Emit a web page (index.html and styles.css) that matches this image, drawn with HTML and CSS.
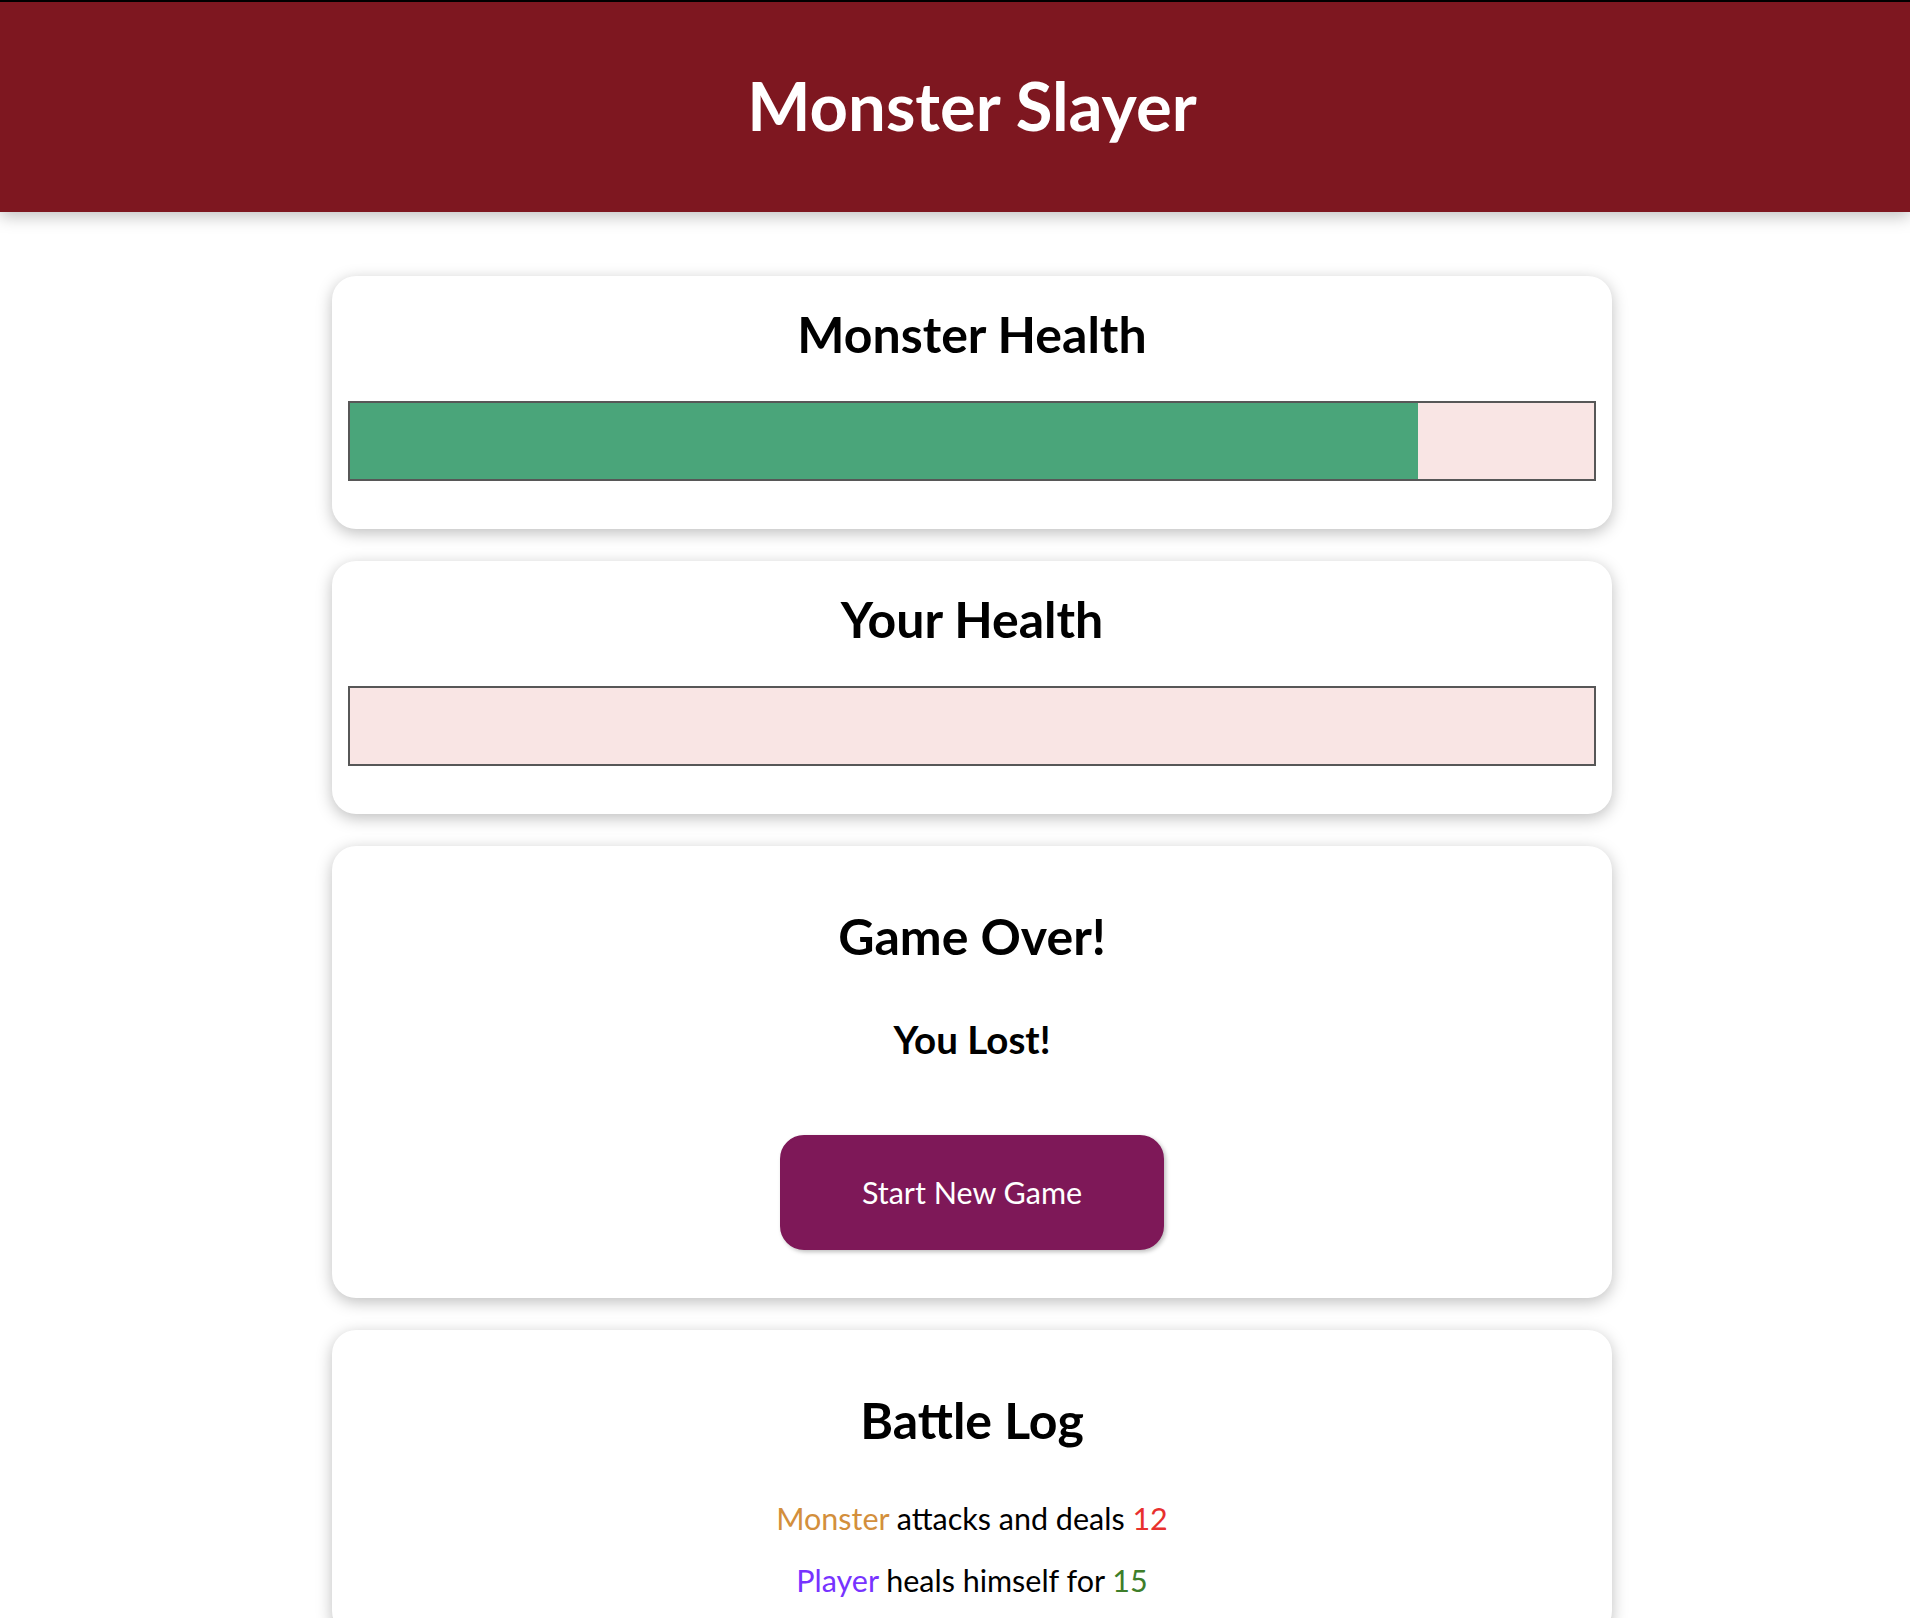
FILE: index.html
```html
<!DOCTYPE html>
<html lang="en">
<head>
  <meta charset="UTF-8">
  <meta name="viewport" content="width=device-width, initial-scale=1.0">
  <title>Monster Slayer</title>
  <link rel="stylesheet" href="styles.css">
</head>
<body>
  <header>
    <h1>Monster Slayer</h1>
  </header>

  <div id="game">
    <section id="monster" class="container">
      <h2>Monster Health</h2>
      <div class="healthbar">
        <div class="healthbar__value" style="width: 85.85%;"></div>
      </div>
    </section>

    <section id="player" class="container">
      <h2>Your Health</h2>
      <div class="healthbar">
        <div class="healthbar__value" style="width: 0%;"></div>
      </div>
    </section>

    <section class="container">
      <h2>Game Over!</h2>
      <h3>You Lost!</h3>
      <button>Start New Game</button>
    </section>

    <section id="log" class="container">
      <h2>Battle Log</h2>
      <ul>
        <li>
          <span class="log--monster">Monster</span>
          attacks and deals
          <span class="log--damage">12</span>
        </li>
        <li>
          <span class="log--player">Player</span>
          heals himself for
          <span class="log--heal">15</span>
        </li>
      </ul>
    </section>
  </div>
</body>
</html>
```

FILE: styles.css
```css
* {
  box-sizing: border-box;
}

html {
  font-family: Lato, "Open Sans", sans-serif;
}

body {
  margin: 0;
  font-size: 32px;
  line-height: 46.2px;
}

header {
  box-shadow: inset 0 2px 0 #000, 0 4px 16px rgba(0, 0, 0, 0.26);
  padding: 16px 16px 16px 50px;
  background-color: #7e1720;
  color: white;
  text-align: center;
  margin-bottom: 64px;
}

header h1 {
  font-size: 67px;
  line-height: 93.5px;
  margin: 43px 0;
}

#game {
  padding-left: 34px;
}

section {
  width: 90%;
  max-width: 1280px;
  margin: auto;
}

.container {
  text-align: center;
  padding: 16px;
  margin: 32px auto;
  background: #fff;
  box-shadow: 0 4px 16px rgba(0, 0, 0, 0.26);
  border-radius: 24px;
}

h2 {
  font-size: 50px;
  line-height: 69.4px;
  margin: 40px 0;
}

h3 {
  font-size: 38.5px;
  line-height: 54.1px;
  margin: 37.5px 0;
}

#monster h2,
#player h2 {
  margin: 8px;
}

.healthbar {
  width: 100%;
  height: 80px;
  border: 2px solid #575757;
  margin: 32px 0;
  background: #f9e5e4;
}

.healthbar__value {
  background-color: #4aa57a;
  height: 100%;
}

button {
  font: inherit;
  font-size: 30.5px;
  border: 2px solid #7e1858;
  background-color: #7e1858;
  color: white;
  padding: 32px 64px;
  border-radius: 24px;
  margin: 32px;
  width: 384px;
  cursor: pointer;
  box-shadow: 2px 2px 4px rgba(0, 0, 0, 0.26);
}

#log ul {
  list-style: none;
  margin: 0;
  padding: 0;
}

#log li {
  margin: 16px 0;
  font-size: 30.5px;
}

.log--player {
  color: #7733ff;
}

.log--monster {
  color: #d38f3c;
}

.log--damage {
  color: #e8302e;
}

.log--heal {
  color: #3e7e2a;
}
```
